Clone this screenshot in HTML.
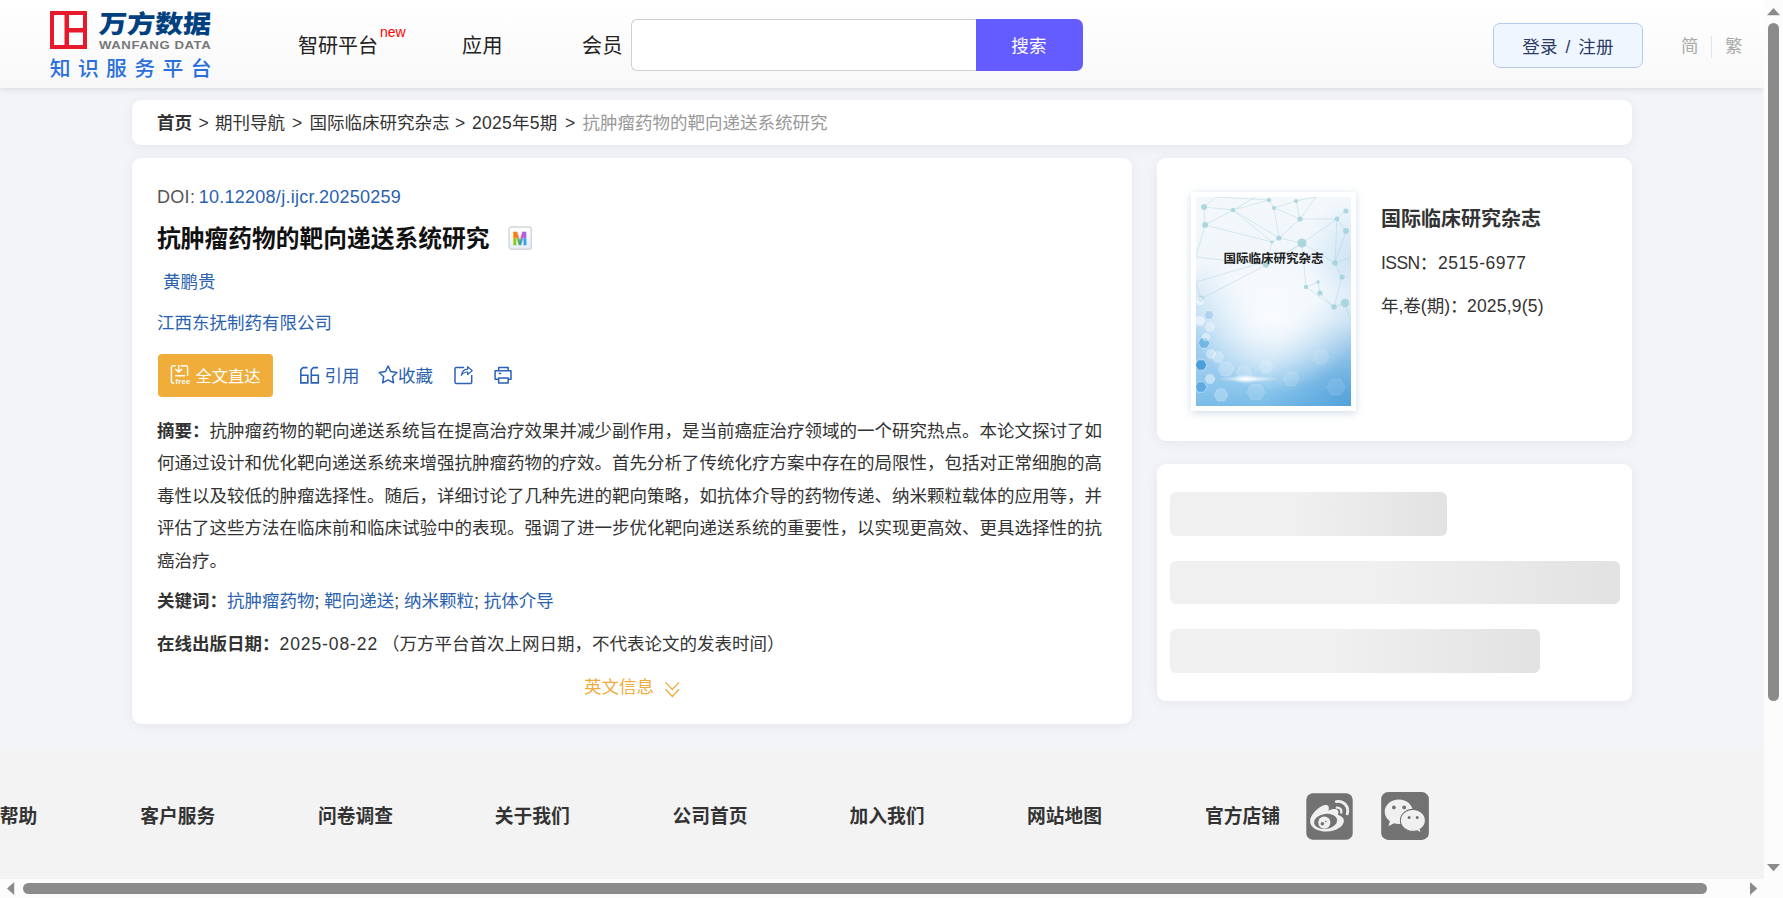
<!DOCTYPE html>
<html lang="zh-CN">
<head>
<meta charset="utf-8">
<title>抗肿瘤药物的靶向递送系统研究</title>
<style>
html,body{margin:0;padding:0;}
body{width:1783px;height:898px;overflow:hidden;position:relative;background:#f3f4f8;
  font-family:"Liberation Sans","Noto Sans CJK SC",sans-serif;color:#333;font-size:17.5px;}
.abs{position:absolute;white-space:nowrap;}
a{text-decoration:none;color:inherit;}
#view{position:absolute;left:0;top:0;width:1764px;height:879px;overflow:hidden;background:#f3f4f8;}
/* header */
#hdr{position:absolute;left:0;top:0;width:1764px;height:88px;background:linear-gradient(#ffffff,#f8f8f9);box-shadow:0 1px 6px rgba(0,0,0,.12);}
.nav{font-size:20px;color:#222;line-height:24px;top:34px;}
#sinput{left:631px;top:19px;width:345px;height:52px;box-sizing:border-box;border:1px solid #d0d0d0;border-right:none;border-radius:6px 0 0 6px;background:#fff;}
#sbtn{left:975.5px;top:19px;width:107px;height:52px;border-radius:0 7px 7px 0;background:#655cff;color:#fff;text-align:center;line-height:54px;letter-spacing:0.3px;font-size:17.5px;}
#login{left:1493px;top:23px;width:150px;height:45px;box-sizing:border-box;border:1px solid #b5caec;border-radius:7px;background:#f0f6ff;color:#2b3a67;text-align:center;line-height:47px;font-size:17.5px;word-spacing:2.5px;letter-spacing:0.3px;}
.lang{font-size:17.5px;color:#aaa;top:34px;line-height:24px;}
/* cards */
.card{position:absolute;background:#fff;border-radius:9px;box-shadow:0 2px 12px rgba(60,70,110,.07);}
#bc{left:132px;top:100px;width:1500px;height:45px;}
#bc .t{top:1px;line-height:45px;font-size:17.5px;color:#333;}
#main{left:132px;top:158px;width:1000px;height:566px;}
#jr{left:1157px;top:158px;width:475px;height:283px;}
#sk{left:1157px;top:464px;width:475px;height:237px;}
.bar{position:absolute;left:13px;height:43.75px;border-radius:6px;background:linear-gradient(90deg,#f0f0f0 0%,#f0f0f0 45%,#e2e2e2 100%);}
.blue{color:#2a62b0;}
b{font-weight:700;}
.ln{left:25px;font-size:17.5px;line-height:32.5px;color:#333;}
/* footer */
#ft{position:absolute;left:0;top:749px;width:1764px;height:130px;background:#f3f3f3;}
.fl{font-size:18.75px;font-weight:700;color:#333;line-height:24px;top:56px;}
.sicon{position:absolute;top:46px;width:47px;height:47px;border-radius:7px;background:#757575;}
/* scrollbars */
#vs{position:absolute;left:1764px;top:0;width:19px;height:898px;background:#fcfcfc;}
#hs{position:absolute;left:0;top:879px;width:1764px;height:19px;background:#fcfcfc;}
.thumb{position:absolute;background:#8b8b8b;border-radius:6px;}
.arr{position:absolute;width:0;height:0;border-style:solid;}
</style>
</head>
<body>
<div id="view">

<!-- HEADER -->
<div id="hdr">
  <svg class="abs" style="left:50px;top:11px" width="37" height="38" viewBox="0 0 37 38">
    <rect x="2" y="2" width="33" height="34" fill="none" stroke="#e8192a" stroke-width="4"/>
    <rect x="14.5" y="2" width="4.5" height="34" fill="#e8192a"/>
    <rect x="17" y="17" width="17" height="4.5" fill="#e8192a"/>
  </svg>
  <div class="abs" id="logocn" style="left:98px;top:5px;font-size:28px;line-height:36px;font-weight:900;color:#00407f;transform:skewX(-4deg) scaleY(0.9);transform-origin:left bottom;">万方数据</div>
  <div class="abs" id="logoen" style="left:99px;top:39px;font-size:11px;line-height:12px;font-weight:700;color:#77787b;letter-spacing:0.45px;transform:scaleX(1.2);transform-origin:left center;">WANFANG DATA</div>
  <div class="abs" id="logosub" style="left:49.7px;top:56px;font-size:20.8px;line-height:26px;color:#2a6fdb;letter-spacing:7.4px;font-weight:500;">知识服务平台</div>

  <div class="abs nav" style="left:298px;">智研平台</div>
  <div class="abs" style="left:380px;top:24px;font-size:14px;line-height:16px;color:#f00;">new</div>
  <div class="abs nav" style="left:462px;letter-spacing:0.6px;">应用</div>
  <div class="abs nav" style="left:582px;letter-spacing:0.4px;">会员</div>
  <div class="abs" id="sinput"></div>
  <div class="abs" id="sbtn">搜索</div>
  <div class="abs" id="login">登录 / 注册</div>
  <div class="abs lang" style="left:1681px;">简</div>
  <div class="abs" style="left:1711px;top:36px;width:1px;height:22px;background:#e3e3e3;"></div>
  <div class="abs lang" style="left:1725px;">繁</div>
</div>

<!-- BREADCRUMB -->
<div class="card" id="bc">
  <div class="abs t" style="left:25px;"><b>首页</b></div>
  <div class="abs t" style="left:66.5px;">&gt;</div>
  <div class="abs t" style="left:83px;">期刊导航</div>
  <div class="abs t" style="left:160px;">&gt;</div>
  <div class="abs t" style="left:177.5px;">国际临床研究杂志</div>
  <div class="abs t" style="left:323px;">&gt;</div>
  <div class="abs t" style="left:340px;letter-spacing:0.25px;">2025年5期</div>
  <div class="abs t" style="left:433px;">&gt;</div>
  <div class="abs t" style="left:450.5px;color:#999;">抗肿瘤药物的靶向递送系统研究</div>
</div>

<!-- MAIN CARD -->
<div class="card" id="main">
  <div class="abs" style="left:25px;top:27px;font-size:18px;line-height:24px;color:#555;"><span style="letter-spacing:0.3px;">DOI:</span> <span class="blue" style="letter-spacing:0.26px;margin-left:-1.5px;">10.12208/j.ijcr.20250259</span></div>
  <div class="abs" id="title" style="left:25px;top:64.5px;font-size:23.75px;line-height:32px;font-weight:700;color:#111;">抗肿瘤药物的靶向递送系统研究</div>
  <svg class="abs" id="micon" style="left:376px;top:68px;" width="25" height="25" viewBox="0 0 25 25">
    <defs>
      <linearGradient id="mbg" x1="0" y1="0" x2="0" y2="1"><stop offset="0" stop-color="#ffffff"/><stop offset="1" stop-color="#e6edf7"/></linearGradient>
      <linearGradient id="mtop" x1="0" y1="0" x2="1" y2="0"><stop offset="0" stop-color="#f5820f"/><stop offset=".33" stop-color="#f07b1a"/><stop offset=".5" stop-color="#e4606a"/><stop offset=".67" stop-color="#b45ad4"/><stop offset="1" stop-color="#b05bdc"/></linearGradient>
      <linearGradient id="mbot" x1="0" y1="0" x2="1" y2="0"><stop offset="0" stop-color="#86c81e"/><stop offset=".33" stop-color="#82c428"/><stop offset=".5" stop-color="#3f9e8c"/><stop offset=".67" stop-color="#3c9be6"/><stop offset="1" stop-color="#3c9be6"/></linearGradient>
      <clipPath id="ct"><rect x="0" y="0" width="25" height="12.4"/></clipPath>
      <clipPath id="cb"><rect x="0" y="12.4" width="25" height="13"/></clipPath>
    </defs>
    <rect x="1" y="1" width="22.3" height="22.3" rx="2.5" fill="url(#mbg)" stroke="#d5d6d9" stroke-width="1.4"/>
    <text x="11.9" y="18.7" text-anchor="middle" font-family="Liberation Sans, sans-serif" font-weight="700" font-size="18.5" fill="url(#mtop)" stroke="url(#mtop)" stroke-width=".5" clip-path="url(#ct)" textLength="14.6" lengthAdjust="spacingAndGlyphs">M</text>
    <text x="11.9" y="18.7" text-anchor="middle" font-family="Liberation Sans, sans-serif" font-weight="700" font-size="18.5" fill="url(#mbot)" stroke="url(#mbot)" stroke-width=".5" clip-path="url(#cb)" textLength="14.6" lengthAdjust="spacingAndGlyphs">M</text>
  </svg>
  <div class="abs blue" style="left:31px;top:112px;line-height:24px;">黄鹏贵</div>
  <div class="abs blue" style="left:25px;top:153px;line-height:24px;">江西东抚制药有限公司</div>

  <div class="abs" id="fullbtn" style="left:26px;top:196px;width:115px;height:43px;border-radius:4px;background:#f0ad3a;color:#fff;">
    <svg class="abs" style="left:12px;top:10px;" width="24" height="24" viewBox="0 0 24 24" fill="none" stroke="#fff" stroke-width="1.4" stroke-linecap="round" stroke-linejoin="round">
      <path d="M5.2 1.7H3.2a1.8 1.8 0 0 0-1.8 1.8V17.2a1.8 1.8 0 0 0 1.8 1.8H3.8"/>
      <path d="M11.2 1.7H15.8a1.8 1.8 0 0 1 1.8 1.8V11.3"/>
      <path d="M8.7 1.4V8M5.6 5.2L8.7 8.2L11.8 5.2M5.6 11.8H14.6"/>
      <text x="5.6" y="20.3" stroke="none" fill="#fff" font-family="Liberation Sans, sans-serif" font-weight="700" font-size="7.6" letter-spacing=".25">free</text>
    </svg>
    <span class="abs" style="left:37.5px;top:0;line-height:44px;font-size:16.25px;">全文直达</span>
  </div>
  <svg class="abs" style="left:166px;top:206px;" width="24" height="22" viewBox="0 0 24 22" fill="none" stroke="#2a62b5" stroke-width="1.6" stroke-linejoin="miter">
    <path d="M9.6 3.6H5L2.8 5.8V18.9H9.8V11.2H2.8"/>
    <path d="M20.1 3.6H15.5L13.3 5.8V18.9H20.3V11.2H13.3"/>
  </svg>
  <div class="abs blue" style="left:192.5px;top:206px;line-height:24px;">引用</div>
  <svg class="abs" style="left:245px;top:206px;" width="22" height="22" viewBox="0 0 22 22" fill="none" stroke="#2a62b5" stroke-width="1.5" stroke-linejoin="round">
    <path d="M11.10 2.00 L13.80 7.58 L19.94 8.43 L15.47 12.72 L16.57 18.82 L11.10 15.90 L5.63 18.82 L6.73 12.72 L2.26 8.43 L8.40 7.58Z"/>
  </svg>
  <div class="abs blue" style="left:266px;top:206px;line-height:24px;">收藏</div>
  <svg class="abs" style="left:320px;top:206px;" width="24" height="22" viewBox="0 0 24 22" fill="none" stroke="#2a62b5" stroke-width="1.5" stroke-linejoin="round" stroke-linecap="round">
    <path d="M11.5 3.4H4.3a1.3 1.3 0 0 0-1.3 1.3V18.2a1.3 1.3 0 0 0 1.3 1.3H18.4a1.3 1.3 0 0 0 1.3-1.3V11.6"/>
    <path d="M9.2 11.5C10 7.6 12.4 5.4 15.6 5.2V2.7L20.3 6.6L15.6 10.5V8C13 8 10.8 9 9.2 11.5Z" stroke-width="1.2"/>
  </svg>
  <svg class="abs" style="left:360px;top:206px;" width="24" height="22" viewBox="0 0 24 22" fill="none" stroke="#2a62b5" stroke-width="1.5" stroke-linejoin="round">
    <path d="M6.65 6.85V3.45H16.15V6.85"/>
    <path d="M6.65 15.3H3.1V6.85H19V15.3H16.15"/>
    <rect x="6.65" y="14.05" width="9.5" height="4.85"/>
    <path d="M6.65 9.4H9.2" />
  </svg>

  <div class="abs ln" style="top:257px;"><b>摘要：</b>抗肿瘤药物的靶向递送系统旨在提高治疗效果并减少副作用，是当前癌症治疗领域的一个研究热点。本论文探讨了如</div>
  <div class="abs ln" style="top:289px;">何通过设计和优化靶向递送系统来增强抗肿瘤药物的疗效。首先分析了传统化疗方案中存在的局限性，包括对正常细胞的高</div>
  <div class="abs ln" style="top:322px;">毒性以及较低的肿瘤选择性。随后，详细讨论了几种先进的靶向策略，如抗体介导的药物传递、纳米颗粒载体的应用等，并</div>
  <div class="abs ln" style="top:354px;">评估了这些方法在临床前和临床试验中的表现。强调了进一步优化靶向递送系统的重要性，以实现更高效、更具选择性的抗</div>
  <div class="abs ln" style="top:387px;">癌治疗。</div>
  <div class="abs ln" style="top:427px;"><b>关键词：</b><span class="blue">抗肿瘤药物</span>; <span class="blue">靶向递送</span>; <span class="blue">纳米颗粒</span>; <span class="blue">抗体介导</span></div>
  <div class="abs ln" style="top:470px;"><b>在线出版日期：</b><span style="letter-spacing:0.9px;">2025-08-22</span></div>
  <div class="abs ln" style="top:470px;left:249.9px;">（万方平台首次上网日期，不代表论文的发表时间）</div>
  <div class="abs" style="left:452px;top:517px;line-height:24px;color:#efac3e;">英文信息</div>
  <svg class="abs" style="left:532px;top:522px;" width="18" height="18" viewBox="0 0 18 18" fill="none" stroke="#f0ad3c" stroke-width="1.35">
    <path d="M1.6 2.4L8.3 9.4L15 2.4M1.6 9.3L8.3 16.4L15 9.3"/>
  </svg>
</div>

<!-- JOURNAL CARD -->
<div class="card" id="jr">
  <div class="abs" id="cover" style="left:34px;top:34px;width:165px;height:219px;background:#fff;box-shadow:0 2px 8px rgba(120,160,190,.35);">
<svg class="abs" style="left:5px;top:5px;" width="155" height="209" viewBox="0 0 155 209">
<defs>
<linearGradient id="cg" x1="0" y1="0" x2="0" y2="1"><stop offset="0" stop-color="#f4f8fb"/><stop offset=".45" stop-color="#eff5fb"/><stop offset=".6" stop-color="#e2eff9"/><stop offset=".76" stop-color="#bcdcf3"/><stop offset=".9" stop-color="#92c9ed"/><stop offset="1" stop-color="#78bce8"/></linearGradient>
<radialGradient id="cr" cx=".5" cy=".5" r=".5"><stop offset="0" stop-color="#fff" stop-opacity=".8"/><stop offset=".6" stop-color="#fff" stop-opacity=".35"/><stop offset="1" stop-color="#fff" stop-opacity="0"/></radialGradient>
<radialGradient id="cl" cx="0" cy=".72" r=".4"><stop offset="0" stop-color="#7fbde9" stop-opacity=".55"/><stop offset="1" stop-color="#7fbde9" stop-opacity="0"/></radialGradient>
<radialGradient id="crr" cx="1" cy="1" r=".55"><stop offset="0" stop-color="#358fd2" stop-opacity=".6"/><stop offset="1" stop-color="#358fd2" stop-opacity="0"/></radialGradient>
<radialGradient id="crt" cx="1" cy=".3" r=".3"><stop offset="0" stop-color="#b6d9f1" stop-opacity=".6"/><stop offset="1" stop-color="#b6d9f1" stop-opacity="0"/></radialGradient>
<radialGradient id="gl" cx=".5" cy=".5" r=".5"><stop offset="0" stop-color="#fff" stop-opacity="1"/><stop offset="1" stop-color="#fff" stop-opacity="0"/></radialGradient>
</defs>
<rect width="155" height="209" fill="url(#cg)"/>
<rect width="155" height="209" fill="url(#cl)"/>
<rect width="155" height="209" fill="url(#crr)"/>
<rect width="155" height="209" fill="url(#crt)"/>
<ellipse cx="78" cy="120" rx="85" ry="75" fill="url(#cr)"/>
<path d="M8 10L37 13M37 13L73 3M37 13L83 41M8 10L9 28M9 28L37 13M73 3L78 11M78 11L104 22M78 11L100 4M100 4L104 22M104 22L141 22M141 22L150 14M104 22L83 41M83 41L76 45M83 41L106 46M106 46L70 68M76 45L70 68M106 46L141 22M106 46L110 90M110 90L122 85M122 85L124 96M106 46L139 66M139 66L146 80M146 80L138 110M138 110L149 106M141 22L150 34M150 34L139 66M37 13L60 0M8 10L20 0M100 4L120 0M104 22L120 0M139 66L155 60M9 28L0 60M70 68L0 60M88 59L0 85M5 102L70 68M5 102L0 85M110 90L138 110M124 96L138 110M149 106L155 125M37 13L76 45M9 28L76 45M78 11L83 41M141 22L139 66M88 59L106 46M73 3L20 0" stroke="#9fcfd8" stroke-width=".7" stroke-opacity=".55" fill="none"/>
<circle cx="8" cy="10" r="3" fill="#9fd0d9" fill-opacity=".8"/>
<circle cx="37" cy="13" r="2.2" fill="#9fd0d9" fill-opacity=".8"/>
<circle cx="73" cy="3" r="2.2" fill="#9fd0d9" fill-opacity=".8"/>
<circle cx="78" cy="11" r="2" fill="#9fd0d9" fill-opacity=".8"/>
<circle cx="100" cy="4" r="2" fill="#9fd0d9" fill-opacity=".8"/>
<circle cx="104" cy="22" r="2.6" fill="#9fd0d9" fill-opacity=".8"/>
<circle cx="141" cy="22" r="2.4" fill="#9fd0d9" fill-opacity=".8"/>
<circle cx="150" cy="14" r="2.6" fill="#9fd0d9" fill-opacity=".8"/>
<circle cx="9" cy="28" r="3" fill="#9fd0d9" fill-opacity=".8"/>
<circle cx="83" cy="41" r="2.6" fill="#9fd0d9" fill-opacity=".8"/>
<circle cx="76" cy="45" r="1.6" fill="#9fd0d9" fill-opacity=".8"/>
<circle cx="106" cy="46" r="4.6" fill="#9fd0d9" fill-opacity=".8"/>
<circle cx="70" cy="68" r="2.8" fill="#9fd0d9" fill-opacity=".8"/>
<circle cx="88" cy="59" r="1.6" fill="#9fd0d9" fill-opacity=".8"/>
<circle cx="110" cy="90" r="2.2" fill="#9fd0d9" fill-opacity=".8"/>
<circle cx="122" cy="85" r="1.8" fill="#9fd0d9" fill-opacity=".8"/>
<circle cx="124" cy="96" r="2.6" fill="#9fd0d9" fill-opacity=".8"/>
<circle cx="5" cy="102" r="3" fill="#9fd0d9" fill-opacity=".8"/>
<circle cx="138" cy="110" r="2.8" fill="#9fd0d9" fill-opacity=".8"/>
<circle cx="149" cy="106" r="4.2" fill="#9fd0d9" fill-opacity=".8"/>
<circle cx="146" cy="80" r="2.6" fill="#9fd0d9" fill-opacity=".8"/>
<circle cx="139" cy="66" r="2.8" fill="#9fd0d9" fill-opacity=".8"/>
<circle cx="150" cy="34" r="3" fill="#9fd0d9" fill-opacity=".8"/>
<polygon points="11.0,168.0 8.0,173.2 2.0,173.2 -1.0,168.0 2.0,162.8 8.0,162.8" fill="#3d98d8" fill-opacity="0.85" stroke="#fff" stroke-opacity="1.00" stroke-width=".5"/>
<polygon points="14.0,146.0 11.0,151.2 5.0,151.2 2.0,146.0 5.0,140.8 11.0,140.8" fill="#58aae0" fill-opacity="0.7" stroke="#fff" stroke-opacity="0.85" stroke-width=".5"/>
<polygon points="20.0,157.0 17.5,161.3 12.5,161.3 10.0,157.0 12.5,152.7 17.5,152.7" fill="#fff" fill-opacity="0.35" stroke="#fff" stroke-opacity="0.50" stroke-width=".5"/>
<polygon points="9.0,124.0 6.5,128.3 1.5,128.3 -1.0,124.0 1.5,119.7 6.5,119.7" fill="#fff" fill-opacity="0.55" stroke="#fff" stroke-opacity="0.70" stroke-width=".5"/>
<polygon points="18.0,118.0 15.5,122.3 10.5,122.3 8.0,118.0 10.5,113.7 15.5,113.7" fill="#9cc3ea" fill-opacity="0.6" stroke="#fff" stroke-opacity="0.75" stroke-width=".5"/>
<polygon points="19.0,130.0 16.5,134.3 11.5,134.3 9.0,130.0 11.5,125.7 16.5,125.7" fill="#fff" fill-opacity="0.35" stroke="#fff" stroke-opacity="0.50" stroke-width=".5"/>
<polygon points="28.0,160.0 25.0,165.2 19.0,165.2 16.0,160.0 19.0,154.8 25.0,154.8" fill="#fff" fill-opacity="0.3" stroke="#fff" stroke-opacity="0.45" stroke-width=".5"/>
<polygon points="19.0,182.0 16.5,186.3 11.5,186.3 9.0,182.0 11.5,177.7 16.5,177.7" fill="#fff" fill-opacity="0.45" stroke="#fff" stroke-opacity="0.60" stroke-width=".5"/>
<polygon points="11.0,190.0 8.0,195.2 2.0,195.2 -1.0,190.0 2.0,184.8 8.0,184.8" fill="#4a9fdb" fill-opacity="0.7" stroke="#fff" stroke-opacity="0.85" stroke-width=".5"/>
<polygon points="38.0,172.0 34.0,178.9 26.0,178.9 22.0,172.0 26.0,165.1 34.0,165.1" fill="#fff" fill-opacity="0.22" stroke="#fff" stroke-opacity="0.37" stroke-width=".5"/>
<polygon points="56.0,176.0 52.0,182.9 44.0,182.9 40.0,176.0 44.0,169.1 52.0,169.1" fill="#fff" fill-opacity="0.15" stroke="#fff" stroke-opacity="0.30" stroke-width=".5"/>
<polygon points="77.0,170.0 73.5,176.1 66.5,176.1 63.0,170.0 66.5,163.9 73.5,163.9" fill="#fff" fill-opacity="0.18" stroke="#fff" stroke-opacity="0.33" stroke-width=".5"/>
<polygon points="103.0,182.0 99.0,188.9 91.0,188.9 87.0,182.0 91.0,175.1 99.0,175.1" fill="#fff" fill-opacity="0.12" stroke="#fff" stroke-opacity="0.27" stroke-width=".5"/>
<polygon points="133.0,160.0 129.0,166.9 121.0,166.9 117.0,160.0 121.0,153.1 129.0,153.1" fill="#fff" fill-opacity="0.12" stroke="#fff" stroke-opacity="0.27" stroke-width=".5"/>
<polygon points="149.0,190.0 144.5,197.8 135.5,197.8 131.0,190.0 135.5,182.2 144.5,182.2" fill="#fff" fill-opacity="0.1" stroke="#fff" stroke-opacity="0.25" stroke-width=".5"/>
<polygon points="69.0,195.0 64.5,202.8 55.5,202.8 51.0,195.0 55.5,187.2 64.5,187.2" fill="#fff" fill-opacity="0.15" stroke="#fff" stroke-opacity="0.30" stroke-width=".5"/>
<polygon points="32.0,198.0 28.5,204.1 21.5,204.1 18.0,198.0 21.5,191.9 28.5,191.9" fill="#fff" fill-opacity="0.25" stroke="#fff" stroke-opacity="0.40" stroke-width=".5"/>
<polygon points="8.0,104.0 6.0,107.5 2.0,107.5 0.0,104.0 2.0,100.5 6.0,100.5" fill="#fff" fill-opacity="0.5" stroke="#fff" stroke-opacity="0.65" stroke-width=".5"/>
<polygon points="14.0,140.0 12.0,143.5 8.0,143.5 6.0,140.0 8.0,136.5 12.0,136.5" fill="#fff" fill-opacity="0.4" stroke="#fff" stroke-opacity="0.55" stroke-width=".5"/>
<ellipse cx="52" cy="182" rx="30" ry="3.2" fill="url(#gl)" fill-opacity=".9"/>
<ellipse cx="50" cy="182" rx="12" ry="5" fill="url(#gl)" fill-opacity=".8"/>
<text x="77.5" y="65.5" text-anchor="middle" font-family="Liberation Sans, Noto Sans CJK SC, sans-serif" font-weight="700" font-size="12.5" fill="#222">国际临床研究杂志</text>
</svg>
</div>
  <div class="abs" style="left:224px;top:47px;font-size:20px;line-height:28px;font-weight:700;color:#333;">国际临床研究杂志</div>
  <div class="abs" style="left:224px;top:93px;line-height:24px;"><span style="letter-spacing:-0.55px;">ISSN</span>：</div>
  <div class="abs" style="left:281px;top:93px;line-height:24px;letter-spacing:0.55px;">2515-6977</div>
  <div class="abs" style="left:224px;top:136px;line-height:24px;">年,卷(期)：</div>
  <div class="abs" style="left:310px;top:136px;line-height:24px;letter-spacing:0.2px;">2025,9(5)</div>
</div>

<!-- SKELETON CARD -->
<div class="card" id="sk">
  <div class="bar" style="top:27.9px;width:277px;"></div>
  <div class="bar" style="top:96.6px;width:450px;"></div>
  <div class="bar" style="top:165.2px;width:370px;"></div>
</div>

<!-- FOOTER -->
<div id="ft">
  <div class="abs fl" style="left:-0.3px;">帮助</div>
  <div class="abs fl" style="left:140.3px;">客户服务</div>
  <div class="abs fl" style="left:318px;">问卷调查</div>
  <div class="abs fl" style="left:494.8px;">关于我们</div>
  <div class="abs fl" style="left:672.5px;">公司首页</div>
  <div class="abs fl" style="left:849.5px;">加入我们</div>
  <div class="abs fl" style="left:1027px;">网站地图</div>
  <div class="abs fl" style="left:1205px;">官方店铺</div>
  <svg class="abs" id="weibo" style="left:1306.1px;top:43.5px;" width="47" height="47" viewBox="0 0 47 47">
    <rect x=".3" y=".3" width="46.4" height="46.4" rx="6.5" fill="#727272"/>
    <path d="M20.5 38.6C11.5 38.6 4.1 34.2 4.1 28.2C4.1 23.6 8.6 17.6 14.6 13.8C18.4 11.5 21.8 11.6 22.6 13.6C23.1 14.8 22.9 16.3 22.4 17.6C25.6 16.1 30 15.2 31.8 17.2C32.8 18.3 32.5 20 31.9 21.4C31.7 21.9 32 22 32.4 22.1C35.5 23 37.9 25 37.9 27.8C37.9 33 30.6 38.6 20.5 38.6Z" fill="#f0f0f0"/>
    <ellipse cx="19.6" cy="28.4" rx="11.6" ry="7.5" transform="rotate(-8 19.6 28.4)" fill="#727272"/>
    <circle cx="18.3" cy="29.6" r="6.1" fill="#f0f0f0"/>
    <circle cx="16.4" cy="30.8" r="1.8" fill="#727272"/>
    <circle cx="19.8" cy="28.6" r=".8" fill="#727272"/>
    <path d="M30.8 14.6C33.6 14.2 35.9 16.6 35.3 19.6" fill="none" stroke="#f0f0f0" stroke-width="2.3" stroke-linecap="round"/>
    <path d="M30.3 8.6C37.6 7.2 43.4 13.6 41.3 20.8" fill="none" stroke="#f0f0f0" stroke-width="2.9" stroke-linecap="round"/>
  </svg>
  <svg class="abs" id="wechat" style="left:1381px;top:43px;" width="48" height="48" viewBox="0 0 48 48">
    <rect x=".2" y=".1" width="47.7" height="47.8" rx="7" fill="#727272"/>
    <path d="M17.8 7.5C10 7.5 3.7 13 3.7 19.8C3.7 23.6 5.7 27 8.9 29.3L7.4 34.2L13 31.2C14.5 31.7 16.1 32 17.8 32C25.6 32 31.9 26.6 31.9 19.8C31.9 13 25.6 7.5 17.8 7.5Z" fill="#f0f0f0"/>
    <circle cx="12.9" cy="15.4" r="1.9" fill="#727272"/>
    <circle cx="23.2" cy="15.4" r="1.9" fill="#727272"/>
    <path d="M31.9 17.4C25 17.4 19.4 22.3 19.4 28.4C19.4 34.5 25 39.4 31.9 39.4C33.4 39.4 34.8 39.2 36.1 38.8L40.4 41.2L39.2 37.3C42.3 35.3 44.4 32.1 44.4 28.4C44.4 22.3 38.8 17.4 31.9 17.4Z" fill="#f0f0f0" stroke="#727272" stroke-width="1.1"/>
    <circle cx="28.1" cy="25.6" r="1.5" fill="#727272"/>
    <circle cx="36.2" cy="25.6" r="1.5" fill="#727272"/>
  </svg>
</div>

</div>

<!-- SCROLLBARS -->
<div id="vs">
  <svg class="abs" style="left:0;top:0;" width="19" height="898"><polygon points="3,15.2 16,15.2 9.5,8" fill="#8b8b8b"/><polygon points="3,864 16,864 9.5,871.2" fill="#8b8b8b"/></svg>
  <div class="thumb" style="left:4px;top:23px;width:11px;height:678px;"></div>
</div>
<div id="hs">
  <svg class="abs" style="left:0;top:0;" width="1764" height="19"><polygon points="14.2,3 14.2,16 7,9.5" fill="#8b8b8b"/><polygon points="1750,3 1750,16 1757.2,9.5" fill="#8b8b8b"/></svg>
  <div class="thumb" style="left:23px;top:4px;width:1684px;height:11px;"></div>
</div>
</body>
</html>
